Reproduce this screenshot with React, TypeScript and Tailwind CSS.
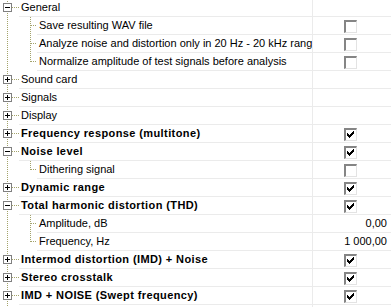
import React from "react";

type Row = {
  label:  string;
  level:  0 | 1;
  bold?:  boolean;
  toggle?: "+" | "-";
  last?:  boolean;
  value?: "on" | "off" | string;
};

const rows: Row[] = [
  { label: "General", level: 0, toggle: "-" },
  { label: "Save resulting WAV file", level: 1, value: "off" },
  { label: "Analyze noise and distortion only in 20 Hz - 20 kHz range", level: 1, value: "off" },
  { label: "Normalize amplitude of test signals before analysis", level: 1, value: "off", last: true },
  { label: "Sound card", level: 0, toggle: "+" },
  { label: "Signals", level: 0, toggle: "+" },
  { label: "Display", level: 0, toggle: "+" },
  { label: "Frequency response (multitone)", level: 0, bold: true, toggle: "+", value: "on" },
  { label: "Noise level", level: 0, bold: true, toggle: "-", value: "on" },
  { label: "Dithering signal", level: 1, value: "off", last: true },
  { label: "Dynamic range", level: 0, bold: true, toggle: "+", value: "on" },
  { label: "Total harmonic distortion (THD)", level: 0, bold: true, toggle: "-", value: "on" },
  { label: "Amplitude, dB", level: 1, value: "0,00" },
  { label: "Frequency, Hz", level: 1, value: "1 000,00", last: true },
  { label: "Intermod distortion (IMD) + Noise", level: 0, bold: true, toggle: "+", value: "on" },
  { label: "Stereo crosstalk", level: 0, bold: true, toggle: "+", value: "on" },
  { label: "IMD + NOISE (Swept frequency)", level: 0, bold: true, toggle: "+", value: "on" },
  { label: "", level: 0 },
];

const DOT = "#a3a36b";

// tree connectors + expander box
function Branch({ row }: { row: Row }) {
  const w = row.level === 0 ? 19 : 37;
  return (
    <svg width={w} height={18} className="shrink-0" shapeRendering="crispEdges">
      <line x1={7.5} y1={0} x2={7.5} y2={18} stroke={DOT} strokeDasharray="1 1" />
      {row.level === 0 && row.label && (
        <>
          <line x1={12} y1={8.5} x2={19} y2={8.5} stroke={DOT} strokeDasharray="1 1" />
          {row.toggle && (
            <g>
              <rect x={3.5} y={4.5} width={8} height={8} fill="#fff" stroke="#808080" />
              <line x1={5} y1={8.5} x2={10} y2={8.5} stroke="#000" />
              {row.toggle === "+" && <line x1={7.5} y1={6} x2={7.5} y2={11} stroke="#000" />}
            </g>
          )}
        </>
      )}
      {row.level === 1 && (
        <>
          <line x1={30.5} y1={0} x2={30.5} y2={row.last ? 9 : 18} stroke={DOT} strokeDasharray="1 1" />
          <line x1={31} y1={8.5} x2={37} y2={8.5} stroke={DOT} strokeDasharray="1 1" />
        </>
      )}
    </svg>
  );
}

function Check({ on }: { on: boolean }) {
  return (
    <span className="flex h-[13px] w-[13px] border-t-2 border-l-2 border-[#858585] border-r border-b border-r-[#e3e3e3] border-b-[#e3e3e3] bg-white">
      {on && (
        <svg width={7} height={7} className="ml-[1px] mt-[1px]" shapeRendering="crispEdges">
          <rect x={6} y={0} width={1} height={3} fill="#000" />
          <rect x={5} y={1} width={1} height={3} fill="#000" />
          <rect x={4} y={2} width={1} height={3} fill="#000" />
          <rect x={3} y={3} width={1} height={3} fill="#000" />
          <rect x={2} y={4} width={1} height={3} fill="#000" />
          <rect x={1} y={3} width={1} height={3} fill="#000" />
          <rect x={0} y={2} width={1} height={3} fill="#000" />
        </svg>
      )}
    </span>
  );
}

export default function App() {
  return (
    <div className="h-[307px] w-[391px] overflow-hidden bg-white font-['Liberation_Sans',sans-serif] text-[11px] text-black">
      <div className="-mt-px flex flex-col">
        {rows.map((r, i) => (
          <div key={i} className="flex h-[18px]">
            <Branch row={r} />
            <div className="flex min-w-0 flex-1 border-b border-[#ebebeb]">
              <div className={`flex min-w-0 flex-1 items-center overflow-hidden whitespace-nowrap border-r border-[#ebebeb] pl-[2px] ${r.bold ? "font-bold tracking-[0.4px]" : ""}`}>
                {r.label}
              </div>
              <div className="flex w-[78px] shrink-0 items-center">
                {r.value === "on" || r.value === "off" ? (
                  <span className="pl-[31px] pt-px">
                    <Check on={r.value === "on"} />
                  </span>
                ) : (
                  <span className="w-full pr-[4px] text-right">{r.value}</span>
                )}
              </div>
            </div>
          </div>
        ))}
      </div>
    </div>
  );
}
